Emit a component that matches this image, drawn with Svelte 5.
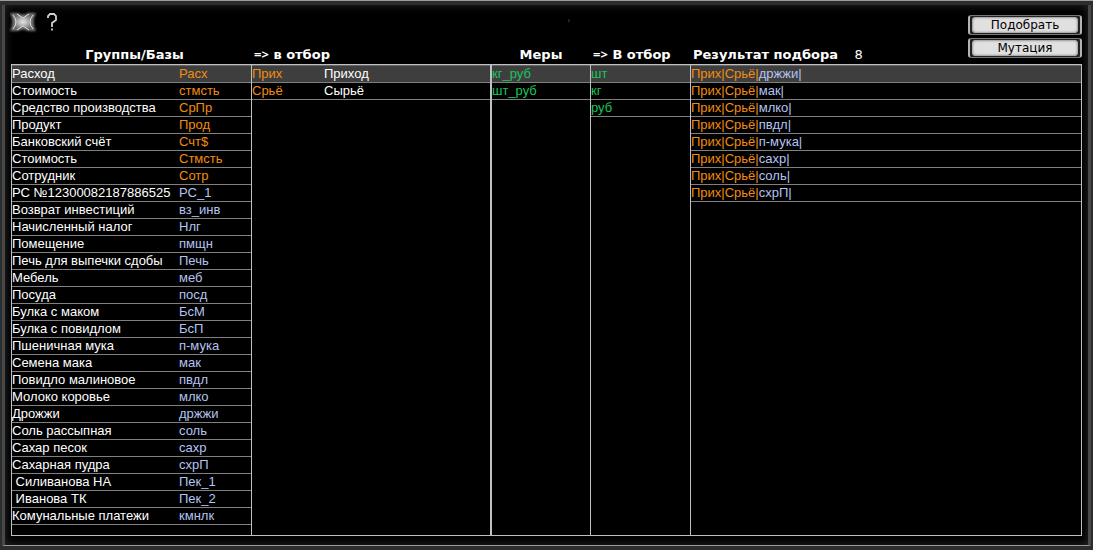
<script lang="ts">
	interface Item {
		name: string;
		code: string;
		kind: 'group' | 'base';
	}

	const groups: [string, string][] = [
		['Расход', 'Расх'],
		['Стоимость', 'стмсть'],
		['Средство производства', 'СрПр'],
		['Продукт', 'Прод'],
		['Банковский счёт', 'Счт$'],
		['Стоимость', 'Стмсть'],
		['Сотрудник', 'Сотр']
	];

	const bases: [string, string][] = [
		['РС №12300082187886525', 'РС_1'],
		['Возврат инвестиций', 'вз_инв'],
		['Начисленный налог', 'Нлг'],
		['Помещение', 'пмщн'],
		['Печь для выпечки сдобы', 'Печь'],
		['Мебель', 'меб'],
		['Посуда', 'посд'],
		['Булка с маком', 'БсМ'],
		['Булка с повидлом', 'БсП'],
		['Пшеничная мука', 'п-мука'],
		['Семена мака', 'мак'],
		['Повидло малиновое', 'пвдл'],
		['Молоко коровье', 'млко'],
		['Дрожжи', 'држжи'],
		['Соль рассыпная', 'соль'],
		['Сахар песок', 'сахр'],
		['Сахарная пудра', 'схрП'],
		[' Силиванова НА', 'Пек_1'],
		[' Иванова ТК', 'Пек_2'],
		['Комунальные платежи', 'кмнлк']
	];

	const items: Item[] = [
		...groups.map(([name, code]) => ({ name, code, kind: 'group' as const })),
		...bases.map(([name, code]) => ({ name, code, kind: 'base' as const }))
	];

	const picked = [
		{ code: 'Прих', name: 'Приход' },
		{ code: 'Срьё', name: 'Сырьё' }
	];
	const measures = ['кг_руб', 'шт_руб'];
	const pickedMeasures = ['шт', 'кг', 'руб'];
	const results = ['држжи', 'мак', 'млко', 'пвдл', 'п-мука', 'сахр', 'соль', 'схрП'];

	const prefix = picked.map((p) => p.code + '|').join('');
</script>

<div class="window">
	<main class="board">
		<nav class="tools">
			<button class="icon" aria-label="Закрыть">
				<svg width="28" height="22" viewBox="0 0 28 22">
					<defs>
						<radialGradient id="metal">
							<stop offset="0" stop-color="#e4e4e4" />
							<stop offset="0.4" stop-color="#b8b8b8" />
							<stop offset="1" stop-color="#6a6a6a" />
						</radialGradient>
						<filter id="glow" x="-20%" y="-20%" width="140%" height="140%">
							<feGaussianBlur stdDeviation="1" />
						</filter>
					</defs>
					<path d="M1 2h8q5 3 10 0h8q-5 9 0 18h-8q-5-3-10 0H1q5-9 0-18z" fill="#777" filter="url(#glow)" />
					<path d="M3 3h5l6 4 6-4h5q-7 8 0 16h-5l-6-4-6 4H3q7-8 0-16z" fill="url(#metal)" />
					<path d="M4 4q6 7 0 14M24 4q-6 7 0 14M8 3l6 4 6-4M8 19l6-4 6 4" fill="none" stroke="#ddd" />
				</svg>
			</button>
			<button class="icon" aria-label="Справка">
				<svg width="10" height="18" viewBox="0 0 10 18" fill="none" stroke="#d0d0d0" stroke-width="1.8">
					<path d="M1 5V3l2-2h4l2 2v4L5 10v4" />
					<path d="M5 15.500v2" />
				</svg>
			</button>
		</nav>
		<output class="status">,</output>
		<div class="actions">
			<button class="action"><span>Подобрать</span></button>
			<button class="action"><span>Мутация</span></button>
		</div>

		<h2 id="h-items" class="centered">Группы/Базы</h2>
		<h2 id="h-picked"><span class="arrow">=&gt;</span> в отбор</h2>
		<h2 id="h-measures" class="centered">Меры</h2>
		<h2 id="h-picked-measures"><span class="arrow">=&gt;</span> В отбор</h2>
		<h2 id="h-results" class="wide">Результат подбора <span class="count">{results.length}</span></h2>

		<section class="list first">
			<table aria-labelledby="h-items">
				<tbody>
					{#each items as item}
						<tr>
							<td class="name">{item.name}</td>
							<td class={item.kind}>{item.code}</td>
						</tr>
					{/each}
				</tbody>
			</table>
		</section>
		<section class="list">
			<table aria-labelledby="h-picked">
				<tbody>
					{#each picked as item}
						<tr>
							<td class="code group">{item.code}</td>
							<td>{item.name}</td>
						</tr>
					{/each}
				</tbody>
			</table>
		</section>
		<section class="list split">
			<table aria-labelledby="h-measures">
				<tbody>
					{#each measures as measure}
						<tr><td class="measure">{measure}</td></tr>
					{/each}
				</tbody>
			</table>
		</section>
		<section class="list">
			<table aria-labelledby="h-picked-measures">
				<tbody>
					{#each pickedMeasures as measure}
						<tr><td class="measure">{measure}</td></tr>
					{/each}
				</tbody>
			</table>
		</section>
		<section class="list">
			<table aria-labelledby="h-results">
				<tbody>
					{#each results as result}
						<tr>
							<td><span class="group">{prefix}</span><span class="base">{result}|</span></td>
						</tr>
					{/each}
				</tbody>
			</table>
		</section>
	</main>
</div>

<style>
	:global(body) {
		margin: 0;
		background: #2b2e2d;
	}

	.window {
		box-sizing: border-box;
		min-height: 100vh;
		display: flex;
		padding: 0 2px 4px;
		border-top: 1px solid #9a9e9c;
		background: #2b2e2d;
	}

	.board {
		flex: 1;
		display: grid;
		grid-template-columns: 241px 239px 100px 100px 1fr;
		grid-template-rows: 41px 18px 1fr;
		margin-top: 4px;
		padding: 0 6px 9px;
		border: 3px solid #484848;
		border-top: 0;
		border-bottom: 1px solid #999;
		background: #000;
		box-shadow: inset 0 0 10px #2a2a2a;
		color: #fff;
		font-family: 'Liberation Sans', Arial, sans-serif;
		font-size: 13px;
		line-height: 16px;
	}

	.tools {
		grid-column: 1 / 3;
		grid-row: 1;
		display: flex;
		align-items: center;
		align-self: start;
		gap: 10px;
		padding-top: 6px;
		margin-left: -2px;
	}

	.icon {
		display: flex;
		padding: 0;
		border: 0;
		background: none;
		cursor: pointer;
	}

	.status {
		grid-column: 3 / 6;
		grid-row: 1;
		padding: 4px 76px;
		color: #345;
	}

	.actions {
		grid-column: 5;
		grid-row: 1 / 3;
		justify-self: end;
		display: flex;
		flex-direction: column;
		gap: 3px;
		padding-top: 10px;
	}

	/* silver brackets outside, dark ring, light plate */
	.action {
		box-sizing: border-box;
		width: 114px;
		height: 20px;
		padding: 0 2px;
		border: solid;
		border-width: 1px 2px;
		border-color: #777 #b4b4b4;
		border-radius: 3px;
		background: #222;
		color: #000;
		font-family: 'DejaVu Sans', Verdana, sans-serif;
		font-size: 12px;
		line-height: 16px;
		cursor: pointer;
	}

	.action span {
		display: block;
		border-radius: 4px;
		background: #e0e0e0;
		box-shadow: inset 0 0 2px 1px #999;
	}

	h2 {
		grid-row: 2;
		margin: 0;
		padding: 1px 0 0 2px;
		font-family: 'DejaVu Sans', Verdana, sans-serif;
		font-size: 13px;
		font-weight: 700;
		line-height: 16px;
		white-space: nowrap;
	}

	.arrow {
		font-family: 'Noto Sans', sans-serif;
		line-height: 1;
	}

	.centered {
		padding-left: 0;
		text-align: center;
	}

	#h-items {
		padding-left: 6px;
	}

	.wide {
		grid-column: 5;
	}

	.count {
		padding-left: 12px;
		font-weight: 400;
	}

	.list {
		grid-row: 3;
		border: 1px solid #c0c0c0;
		border-left-width: 0;
	}

	.first {
		border-left-width: 1px;
	}

	.split {
		border-left-width: 1px;
	}

	table {
		width: 100%;
		border-collapse: separate;
		border-spacing: 0;
	}

	td {
		height: 16px;
		padding: 0;
		border-bottom: 1px solid #808080;
		white-space: pre;
	}

	tr:first-child td {
		border-top: 1px solid #666;
		background: #3e3e3e;
	}

	.name {
		width: 167px;
	}

	.code {
		width: 72px;
	}

	.group {
		color: #f28c0f;
	}

	.base {
		color: #b4c4f0;
	}

	.measure {
		color: #18c55c;
	}
</style>
